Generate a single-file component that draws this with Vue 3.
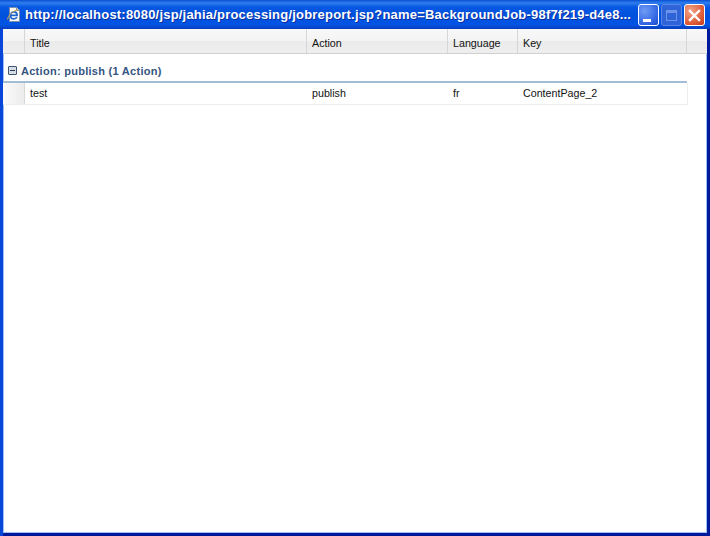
<template>
  <div class="window">
    <div class="titlebar">
      <svg class="app-icon" width="16" height="17" viewBox="0 0 16 17">
        <path d="M3.5 1.5h7l3 3v11h-10z" fill="#fff" stroke="#7f8fa8"/>
        <path d="M10.5 1.5v3h3" fill="#cfd9e8" stroke="#7f8fa8"/>
        <path d="M4.7 9.3h6.4C11.1 7.2 9.7 5.9 7.9 5.9 5.9 5.9 4.5 7.5 4.5 9.5s1.5 3.4 3.4 3.4c1.4 0 2.4-.6 3-1.7" fill="none" stroke="#1c66cc" stroke-width="1.7"/>
        <path d="M1.5 13.5C2.5 9 6.5 5 12 3.5" fill="none" stroke="#dcae3c"/>
      </svg>
      <span class="title">{{ title }}</span>
      <div class="buttons">
        <div class="btn btn-min"><span class="min-bar"></span></div>
        <div class="btn btn-max"><span class="max-box"></span></div>
        <div class="btn btn-close">
          <svg width="13" height="13" viewBox="0 0 13 13">
            <path d="M2 2l9 9M11 2l-9 9" stroke="#fff" stroke-width="2.4" stroke-linecap="square"/>
          </svg>
        </div>
      </div>
    </div>
    <div class="content">
      <div class="head">
        <div class="hcell" v-for="col in columns" :key="col">{{ col }}</div>
        <div class="hcell hlast"></div>
      </div>
      <div class="group">
        <span class="toggle"><span class="toggle-bar"></span></span>
        <span class="group-label">Action: publish (1 Action)</span>
      </div>
      <div class="rule"></div>
      <div class="row" v-for="row in rows" :key="row.key">
        <div class="marker"></div>
        <div class="cell">{{ row.title }}</div>
        <div class="cell">{{ row.action }}</div>
        <div class="cell">{{ row.language }}</div>
        <div class="cell">{{ row.key }}</div>
      </div>
    </div>
  </div>
</template>

<script setup>
const title = 'http://localhost:8080/jsp/jahia/processing/jobreport.jsp?name=BackgroundJob-98f7f219-d4e8...'
const columns = ['', 'Title', 'Action', 'Language', 'Key']
const rows = [
  { title: 'test', action: 'publish', language: 'fr', key: 'ContentPage_2' }
]
</script>

<style>
html, body {
  margin: 0;
  background: #fff;
  overflow: hidden;
}
</style>

<style scoped>
.window {
  width: 710px;
  height: 536px;
  display: flex;
  flex-direction: column;
  box-sizing: border-box;
  background: linear-gradient(to right, #0746d8 0, #0746d8 3px, #00189a 3px, #00189a 100%);
  font-family: "Liberation Sans", Arial, sans-serif;
  font-size: 10.7px;
  color: #111;
  overflow: hidden;
}

.titlebar {
  height: 29px;
  flex: none;
  display: flex;
  align-items: center;
  padding: 0 5px 0 6px;
  box-sizing: border-box;
  background: linear-gradient(to bottom, #0a4fd2 0%, #2f7eee 10%, #0658e2 24%, #0050dc 55%, #0155e4 85%, #0a3cbc 100%);
}

.app-icon {
  flex: none;
  margin-right: 3px;
}

.title {
  flex: 1;
  font-family: "Liberation Sans", Arial, sans-serif;
  font-weight: bold;
  font-size: 13px;
  letter-spacing: 0.2px;
  color: #fff;
  text-shadow: 1px 1px 0 #0a2fa0;
  white-space: nowrap;
}

.buttons {
  display: flex;
  gap: 2px;
  flex: none;
  margin-top: 1px;
}

.btn {
  width: 21px;
  height: 22px;
  box-sizing: border-box;
  border: 1px solid #fff;
  border-radius: 3px;
  display: flex;
  align-items: center;
  justify-content: center;
  position: relative;
}

.btn-min {
  background: radial-gradient(circle at 30% 30%, #6f9cf5, #2a5fe0 75%, #1d45c0);
}

.min-bar {
  position: absolute;
  left: 4px;
  bottom: 3px;
  width: 8px;
  height: 3px;
  background: #fff;
}

.btn-max {
  background: #2f63d8;
  border-color: #5b86e3;
}

.max-box {
  width: 11px;
  height: 11px;
  box-sizing: border-box;
  border: 1px solid #6d94ea;
  border-top-width: 3px;
}

.btn-close {
  background: radial-gradient(circle at 30% 30%, #f0a48a, #df5a35 65%, #c23a18);
}

.content {
  flex: 1;
  margin: 0 3px 3px 3px;
  background: #fff;
  box-shadow: inset 1px 0 0 #9cc0f5, inset -1px 0 0 #9cc0f5, inset 0 -1px 0 #9cc0f5;
  min-height: 0;
}

.head {
  display: grid;
  grid-template-columns: 22px 282px 141px 70px 169px 1fr;
  height: 25px;
  box-sizing: border-box;
  background: linear-gradient(to bottom, #f8f8f8 0%, #f4f4f4 50%, #ebebeb 52%, #eeeeee 100%);
  border-bottom: 1px solid #d0d0d0;
}

.hcell {
  height: 24px;
  box-sizing: border-box;
  padding: 4px 0 0 5px;
  line-height: 20px;
  border-right: 1px solid #d6d6d6;
  white-space: nowrap;
}

.hlast {
  border-right: none;
}

.group {
  height: 27px;
  display: flex;
  align-items: flex-end;
  padding-left: 5px;
  padding-bottom: 3px;
  box-sizing: border-box;
  gap: 4px;
}

.toggle {
  width: 9px;
  height: 9px;
  box-sizing: border-box;
  border: 1px solid #3f5570;
  border-radius: 1px;
  background: #d8dde4;
  display: flex;
  align-items: center;
  justify-content: center;
  margin-bottom: 3px;
}

.toggle-bar {
  width: 5px;
  height: 1px;
  background: #243c60;
}

.group-label {
  font-weight: bold;
  font-size: 11px;
  letter-spacing: 0.28px;
  color: #34557f;
  line-height: 13px;
}

.rule {
  height: 2px;
  width: 684px;
  background: #a3bcd6;
}

.row {
  display: grid;
  grid-template-columns: 22px 282px 141px 70px 169px;
  width: 685px;
  height: 22px;
  box-sizing: border-box;
  border-bottom: 1px solid #ededed;
  border-right: 1px solid #ededed;
}

.marker {
  background: linear-gradient(to right, #fafafa, #ececec);
  border-right: 1px solid #d8d8d8;
}

.cell {
  padding-left: 5px;
  line-height: 20px;
  white-space: nowrap;
}
</style>
